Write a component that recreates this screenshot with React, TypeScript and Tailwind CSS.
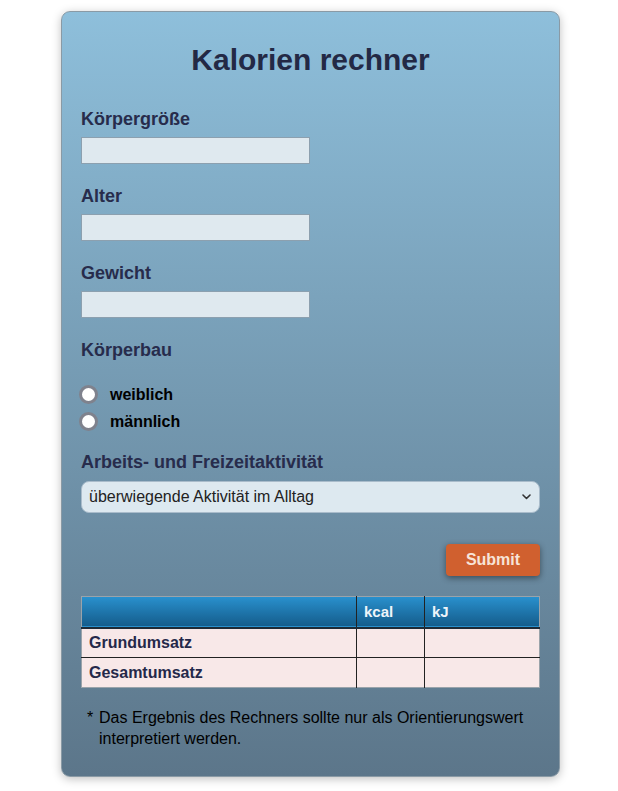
import React, { useState } from 'react';

const Field: React.FC<{ label: string; gap?: string }> = ({ label, gap = 'mt-[22px]' }) => (
    <div className={gap}>
        <label className="block text-[18px] leading-5 font-bold text-[#272c4c]">{label}</label>
        <input
            type="text"
            className="mt-[8px] block w-[229px] h-[27px] bg-[#dfe9ef] border border-[#8ca0af] outline-none px-1 text-[15px]"
        />
    </div>
);

export default function App() {
    const [sex, setSex] = useState('');

    return (
        <div className="min-h-screen bg-white pt-[11px] font-['Liberation_Sans',Arial,sans-serif]">
            <div className="ml-[61px] w-[499px] rounded-[9px] border border-[#8a9aa5] bg-gradient-to-b from-[#8ebfdb] to-[#5c768a] px-[19px] pt-[32px] pb-[27px] shadow-[0_2px_10px_rgba(0,0,0,0.25)]">
                <h1 className="text-center text-[30px] leading-8 font-bold text-[#232945]">Kalorien rechner</h1>

                <Field label="Körpergröße" gap="mt-[33px]" />
                <Field label="Alter" />
                <Field label="Gewicht" />

                <div className="mt-[22px]">
                    <p className="text-[18px] leading-5 font-bold text-[#272c4c]">Körperbau</p>
                    <div className="mt-[25px] flex flex-col gap-[8px]">
                        {['weiblich', 'männlich'].map((s) => (
                            <div key={s} className="flex items-center cursor-pointer" onClick={() => setSex(s)}>
                                <div className="-ml-[2px] mr-[12px] flex h-[19px] w-[19px] shrink-0 items-center justify-center rounded-full border-[3px] border-[#7f828d] bg-white">
                                    {sex === s && <div className="h-[7px] w-[7px] rounded-full bg-[#2a6fb0]" />}
                                </div>
                                <span className="text-[16px] leading-[19px] font-bold text-black">{s}</span>
                            </div>
                        ))}
                    </div>
                </div>

                <div className="mt-[21px]">
                    <p className="text-[18px] leading-5 font-bold text-[#272c4c]">Arbeits- und Freizeitaktivität</p>
                    <div className="relative mt-[9px]">
                        <select className="block w-full h-[32px] appearance-none rounded-[8px] border border-[#a9bccb] bg-[#dde9f0] pl-[7px] text-[16px] text-[#222] outline-none">
                            <option>überwiegende Aktivität im Alltag</option>
                            <option>überwiegend sitzende Tätigkeit</option>
                            <option>körperlich anstrengende Arbeit</option>
                        </select>
                        <svg className="pointer-events-none absolute right-[9px] top-[13px]" width="9" height="6" viewBox="0 0 9 6" fill="none">
                            <path d="M1 1l3.5 3.5L8 1" stroke="#333" strokeWidth="1.6" strokeLinecap="round" strokeLinejoin="round" />
                        </svg>
                    </div>
                </div>

                <div className="mt-[31px] flex justify-end">
                    <button className="h-[32px] w-[94px] rounded-[4px] bg-[#d0602f] text-[16px] font-bold text-[#f7e4d8] shadow-[0_2px_6px_rgba(0,0,0,0.45)]">
                        Submit
                    </button>
                </div>

                <table className="mt-[20px] w-full border-collapse border border-[#9aa3aa]">
                    <thead>
                        <tr className="h-[31px] bg-gradient-to-b from-[#2990cd] to-[#155d8c] border-b-2 border-[#1e2a36]">
                            <th className="w-[275px] border-r border-[#222]"></th>
                            <th className="w-[68px] border-r border-[#222] pl-[7px] text-left text-[15px] font-bold text-[#eef4fa]">kcal</th>
                            <th className="pl-[7px] text-left text-[15px] font-bold text-[#eef4fa]">kJ</th>
                        </tr>
                    </thead>
                    <tbody className="bg-[#f8e8e8]">
                        {['Grundumsatz', 'Gesamtumsatz'].map((row, i) => (
                            <tr key={row} className={`h-[30px] ${i === 0 ? 'border-b border-[#222]' : ''}`}>
                                <td className="border-r border-[#222] pl-[7px] text-[16px] font-bold text-[#25284a]">{row}</td>
                                <td className="border-r border-[#222]"></td>
                                <td></td>
                            </tr>
                        ))}
                    </tbody>
                </table>

                <div className="mt-[19px] flex pl-[6px] text-[16px] leading-[21px] text-black">
                    <span className="w-[12px] shrink-0">*</span>
                    <p className="w-[440px]">Das Ergebnis des Rechners sollte nur als Orientierungswert interpretiert werden.</p>
                </div>
            </div>
        </div>
    );
}
